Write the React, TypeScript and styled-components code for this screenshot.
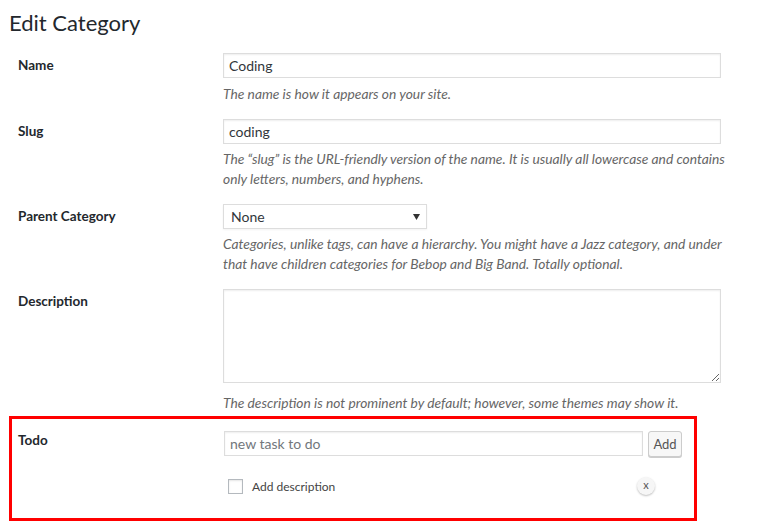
import React from 'react';
import styled, { createGlobalStyle } from 'styled-components';

const GlobalStyle = createGlobalStyle`
    body {
        margin: 0;
        background: #fff;
        font-family: Lato, "Open Sans", sans-serif;
        color: #23282d;
    }
`;

const Page = styled.div`
    width: 768px;
    height: 528px;
    padding: 0 9px;
    box-sizing: border-box;
    overflow: hidden;
`;

const Title = styled.h1`
    margin: 0 0 9px;
    padding-top: 8px;
    font-size: 22px;
    font-weight: 400;
    line-height: 29px;
    color: #23282d;
`;

const Row = styled.div<{ $bottom?: number }>`
    display: grid;
    grid-template-columns: 205px 510px;
    padding: 7px 0 ${({ $bottom }) => ($bottom ?? 8)}px 9px;
`;

const Label = styled.div<{ $top?: number }>`
    margin-top: ${({ $top }) => ($top ?? 2)}px;
    font-size: 13.5px;
    font-weight: 700;
    line-height: 20px;
    color: #23282d;
`;

const Field = styled.div`
    display: flex;
    flex-direction: column;
    align-items: flex-start;
`;

const TextInput = styled.input<{ $width?: number }>`
    box-sizing: border-box;
    width: ${({ $width }) => $width ?? 498}px;
    height: 25px;
    margin: 0;
    padding: 0 5px;
    border: 1px solid #ddd;
    box-shadow: inset 0 1px 2px rgba(0, 0, 0, 0.07);
    font-family: Lato, "Open Sans", sans-serif;
    font-size: 14px;
    color: #32373c;
    outline: none;

    &::placeholder {
        color: #72777c;
    }
`;

const SelectBox = styled.div`
    box-sizing: border-box;
    width: 204px;
    height: 25px;
    display: flex;
    align-items: center;
    justify-content: space-between;
    padding: 0 6px 0 7px;
    border: 1px solid #ddd;
    box-shadow: 0 1px 2px rgba(0, 0, 0, 0.05);
    font-size: 14px;
    color: #32373c;
`;

const TextArea = styled.textarea`
    display: block;
    box-sizing: border-box;
    width: 498px;
    height: 94px;
    margin: 0;
    border: 1px solid #ddd;
    box-shadow: inset 0 1px 2px rgba(0, 0, 0, 0.07);
    resize: both;
    outline: none;
`;

const Hint = styled.p<{ $top?: number }>`
    margin: ${({ $top }) => $top ?? 5}px 0 0;
    font-size: 13.8px;
    font-style: italic;
    line-height: 20px;
    color: #666;
`;

const TodoBox = styled.div`
    width: 688px;
    height: 105px;
    box-sizing: border-box;
    border: 3px solid #ff0000;
    padding: 12px 12px 0 6px;
    display: grid;
    grid-template-columns: 206px 1fr;
`;

const TodoField = styled.div`
    display: flex;
    flex-direction: column;
    gap: 20px;
`;

const AddLine = styled.div`
    display: flex;
    gap: 5px;
`;

const AddButton = styled.button`
    box-sizing: border-box;
    width: 34px;
    height: 26px;
    padding: 0;
    border: 1px solid #ccc;
    border-radius: 3px;
    background: #f7f7f7;
    box-shadow: 0 1px 0 #ccc;
    font-family: Lato, "Open Sans", sans-serif;
    font-size: 13px;
    color: #555;
`;

const OptionLine = styled.div`
    width: 435px;
    box-sizing: border-box;
    padding: 0 4px;
    display: flex;
    align-items: center;
    justify-content: space-between;
`;

const CheckLabel = styled.label`
    display: flex;
    align-items: center;
    gap: 9px;
    font-size: 12px;
    color: #444;
`;

const CheckSquare = styled.span`
    width: 15px;
    height: 15px;
    box-sizing: border-box;
    border: 1px solid #b4b9be;
    background: #fff;
    box-shadow: inset 0 1px 2px rgba(0, 0, 0, 0.1);
`;

const RemoveButton = styled.button`
    width: 18px;
    height: 18px;
    padding: 0 0 2px;
    border: none;
    border-radius: 50%;
    background: #f6f6f6;
    box-shadow: 0 1px 2px rgba(0, 0, 0, 0.25);
    font-family: Lato, "Open Sans", sans-serif;
    font-size: 11px;
    line-height: 16px;
    color: #555;
`;

const Arrow = () => (
    <svg width="7" height="6" viewBox="0 0 7 6">
        <path d="M0 0 L7 0 L3.5 6 Z" fill="#333" />
    </svg>
);

const App = () => {
    return (
        <Page>
            <GlobalStyle />
            <Title>Edit Category</Title>

            <Row>
                <Label>Name</Label>
                <Field>
                    <TextInput defaultValue="Coding" />
                    <Hint $top={6}>The name is how it appears on your site.</Hint>
                </Field>
            </Row>

            <Row>
                <Label>Slug</Label>
                <Field>
                    <TextInput defaultValue="coding" />
                    <Hint>
                        The “slug” is the URL-friendly version of the name. It
                        is usually all lowercase and contains only letters,
                        numbers, and hyphens.
                    </Hint>
                </Field>
            </Row>

            <Row>
                <Label>Parent Category</Label>
                <Field>
                    <SelectBox>
                        <span>None</span>
                        <Arrow />
                    </SelectBox>
                    <Hint>
                        Categories, unlike tags, can have a hierarchy. You might
                        have a Jazz category, and under that have children
                        categories for Bebop and Big Band. Totally optional.
                    </Hint>
                </Field>
            </Row>

            <Row $bottom={3}>
                <Label>Description</Label>
                <Field>
                    <TextArea />
                    <Hint $top={10}>
                        The description is not prominent by default; however,
                        some themes may show it.
                    </Hint>
                </Field>
            </Row>

            <TodoBox>
                <Label $top={-1}>Todo</Label>
                <TodoField>
                    <AddLine>
                        <TextInput $width={419} placeholder="new task to do" />
                        <AddButton>Add</AddButton>
                    </AddLine>
                    <OptionLine>
                        <CheckLabel>
                            <CheckSquare />
                            Add description
                        </CheckLabel>
                        <RemoveButton>x</RemoveButton>
                    </OptionLine>
                </TodoField>
            </TodoBox>
        </Page>
    );
};

export default App;
